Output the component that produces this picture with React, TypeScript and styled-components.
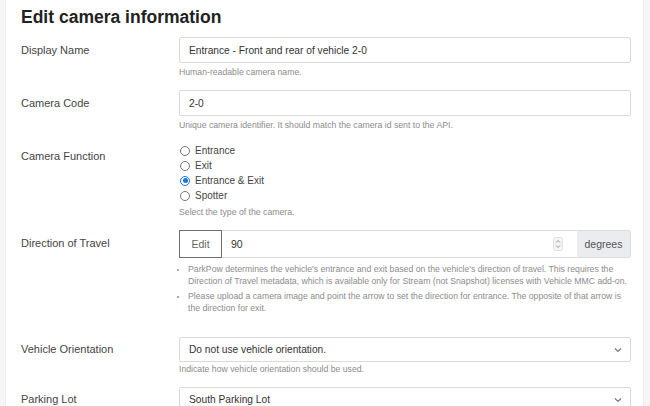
import React from 'react';
import styled, { createGlobalStyle } from 'styled-components';

const GlobalStyle = createGlobalStyle`
  html, body {
    margin: 0;
    padding: 0;
    background: #f6f6f6;
  }
  body {
    font-family: "Liberation Sans", Arial, sans-serif;
  }
`;

const Card = styled.div`
  margin-left: 5px;
  width: 639px;
  min-height: 406px;
  box-sizing: border-box;
  background: #ffffff;
  border-left: 1px solid #ececec;
  border-right: 1px solid #ececec;
  padding: 5px 12px 0 15px;
`;

const Title = styled.h1`
  margin: 0 0 8px;
  font-size: 17.5px;
  line-height: 24px;
  font-weight: bold;
  color: #222;
`;

const Row = styled.div<{ $gapTop?: number; $gapBottom?: number }>`
  display: grid;
  grid-template-columns: 158px 1fr;
  margin-top: ${(p) => p.$gapTop ?? 0}px;
  margin-bottom: ${(p) => p.$gapBottom ?? 13}px;
`;

const Label = styled.div<{ $h?: number }>`
  font-size: 11px;
  line-height: ${(p) => p.$h ?? 26}px;
  color: #444;
`;

const Field = styled.div`
  display: flex;
  flex-direction: column;
`;

const TextInput = styled.div`
  height: 26px;
  box-sizing: border-box;
  border: 1px solid #dadada;
  border-radius: 2px;
  padding: 0 9px;
  display: flex;
  align-items: center;
  font-size: 10.2px;
  color: #333;
`;

const Help = styled.div<{ $gap?: number }>`
  margin-top: ${(p) => p.$gap ?? 4}px;
  font-size: 8.7px;
  line-height: 10px;
  color: #8c8c8c;
`;

const RadioList = styled.div`
  display: flex;
  flex-direction: column;
`;

const RadioItem = styled.div`
  display: flex;
  align-items: center;
  height: 15px;
  gap: 5px;
  padding-left: 1px;
  font-size: 10px;
  color: #444;
`;

const RadioDot = styled.span<{ $checked?: boolean }>`
  width: 10px;
  height: 10px;
  box-sizing: border-box;
  border-radius: 50%;
  border: 1px solid ${(p) => (p.$checked ? '#1a73e8' : '#767676')};
  display: flex;
  align-items: center;
  justify-content: center;
  &::after {
    content: '';
    display: ${(p) => (p.$checked ? 'block' : 'none')};
    width: 5px;
    height: 5px;
    border-radius: 50%;
    background: #1a73e8;
  }
`;

const Group = styled.div`
  display: flex;
  height: 28px;
  box-sizing: border-box;
  border: 1px solid #dedede;
  border-radius: 2px;
`;

const EditButton = styled.div`
  width: 43px;
  margin: -1px 0 -1px -1px;
  box-sizing: border-box;
  border: 1px solid #6f6f6f;
  display: flex;
  align-items: center;
  justify-content: center;
  font-size: 10.5px;
  color: #666;
`;

const NumberBox = styled.div`
  flex: 1;
  display: flex;
  align-items: center;
  justify-content: space-between;
  padding: 0 14px 0 9px;
  font-size: 10.5px;
  color: #333;
`;

const Addon = styled.div`
  width: 53px;
  background: #eaecef;
  display: flex;
  align-items: center;
  justify-content: center;
  font-size: 10.5px;
  color: #555;
`;

const Notes = styled.ul`
  margin: 5px 0 10px;
  padding-left: 9px;
  font-size: 8.7px;
  line-height: 12px;
  color: #8c8c8c;
  li::marker {
    color: #8c8c8c;
    font-size: 7px;
  }
  li + li {
    margin-top: 3px;
  }
`;

const Select = styled.div`
  height: 25px;
  box-sizing: border-box;
  border: 1px solid #dadada;
  border-radius: 2px;
  padding: 0 8px 0 9px;
  display: flex;
  align-items: center;
  justify-content: space-between;
  font-size: 10.2px;
  color: #333;
`;

const Spinner = () => (
  <svg width="10" height="14" viewBox="0 0 10 14">
    <rect x="0.5" y="0.5" width="9" height="13" rx="2" fill="#f3f3f3" stroke="#e2e2e2" />
    <path d="M3 5.5 L5 3.5 L7 5.5" fill="none" stroke="#9a9a9a" strokeWidth="1" />
    <path d="M3 8.5 L5 10.5 L7 8.5" fill="none" stroke="#9a9a9a" strokeWidth="1" />
  </svg>
);

const Chevron = () => (
  <svg width="8" height="6" viewBox="0 0 8 6">
    <path d="M1 1.5 L4 4.5 L7 1.5" fill="none" stroke="#777" strokeWidth="1.2" />
  </svg>
);

const functions = ['Entrance', 'Exit', 'Entrance & Exit', 'Spotter'];

export default function App() {
  return (
    <>
      <GlobalStyle />
      <Card>
        <Title>Edit camera information</Title>

        <Row>
          <Label>Display Name</Label>
          <Field>
            <TextInput>Entrance - Front and rear of vehicle 2-0</TextInput>
            <Help>Human-readable camera name.</Help>
          </Field>
        </Row>

        <Row>
          <Label>Camera Code</Label>
          <Field>
            <TextInput>2-0</TextInput>
            <Help>Unique camera identifier. It should match the camera id sent to the API.</Help>
          </Field>
        </Row>

        <Row>
          <Label>Camera Function</Label>
          <Field>
            <RadioList>
              {functions.map((f) => (
                <RadioItem key={f}>
                  <RadioDot $checked={f === 'Entrance & Exit'} />
                  {f}
                </RadioItem>
              ))}
            </RadioList>
            <Help>Select the type of the camera.</Help>
          </Field>
        </Row>

        <Row $gapBottom={0}>
          <Label>Direction of Travel</Label>
          <Field>
            <Group>
              <EditButton>Edit</EditButton>
              <NumberBox>
                90
                <Spinner />
              </NumberBox>
              <Addon>degrees</Addon>
            </Group>
            <Notes>
              <li>
                ParkPow determines the vehicle's entrance and exit based on the vehicle's direction of travel. This
                requires the Direction of Travel metadata, which is available only for Stream (not Snapshot) licenses
                with Vehicle MMC add-on.
              </li>
              <li>
                Please upload a camera image and point the arrow to set the direction for entrance. The opposite of
                that arrow is the direction for exit.
              </li>
            </Notes>
          </Field>
        </Row>

        <Row $gapTop={13}>
          <Label $h={25}>Vehicle Orientation</Label>
          <Field>
            <Select>
              Do not use vehicle orientation.
              <Chevron />
            </Select>
            <Help $gap={2}>Indicate how vehicle orientation should be used.</Help>
          </Field>
        </Row>

        <Row>
          <Label $h={25}>Parking Lot</Label>
          <Field>
            <Select>
              South Parking Lot
              <Chevron />
            </Select>
          </Field>
        </Row>
      </Card>
    </>
  );
}
